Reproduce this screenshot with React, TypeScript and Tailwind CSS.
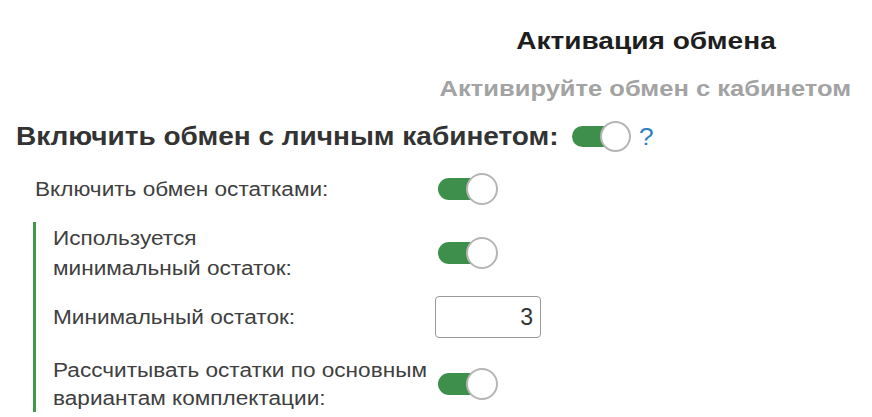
import React from "react";

function Toggle({ small = false }: { small?: boolean }) {
  return (
    <div className={small ? "relative w-[59px] h-[31px] shrink-0" : "relative w-[60px] h-[32px] shrink-0"}>
      <div className={small ? "absolute left-0 top-[5px] w-[44px] h-[21px] rounded-full bg-[#3f8f4c]" : "absolute left-0 top-[5px] w-[44px] h-[22px] rounded-full bg-[#3f8f4c]"} />
      <div className={small ? "absolute right-0 top-0 w-[31px] h-[31px] rounded-full bg-white border-2 border-[#b5b5b5]" : "absolute right-0 top-0 w-[32px] h-[32px] rounded-full bg-white border-2 border-[#b5b5b5]"} />
    </div>
  );
}

const label = "text-[20px] text-[#404040] origin-left scale-x-[1.13] whitespace-nowrap";

export default function App() {
  return (
    <div className="w-[872px] h-[417px] bg-white overflow-hidden" style={{ fontFamily: '"Liberation Sans", Arial, sans-serif' }}>
      <div className="ml-[440px] w-[411px] pt-[26px] flex flex-col items-center">
        <div className="text-[24px] leading-[30px] font-bold text-[#1e1e1e] scale-x-[1.17] whitespace-nowrap">Активация обмена</div>
        <div className="mt-[19px] text-[22px] leading-[28px] font-bold text-[#a3a3a3] scale-x-[1.16] whitespace-nowrap">Активируйте обмен с кабинетом</div>
      </div>
      <div className="flex items-center pl-[16px] mt-[18px] h-[31px]">
        <div className="w-[556px] shrink-0 text-[25px] leading-[31px] font-bold text-[#333] origin-left scale-x-[1.12] whitespace-nowrap">Включить обмен с личным кабинетом:</div>
        <Toggle small />
        <div className="ml-[8px] text-[24px] leading-[31px] text-[#2f7fc5] origin-left scale-x-[1.1]">?</div>
      </div>
      <div className="pl-[35px] mt-[21px]">
        <div className="flex items-center h-[32px]">
          <div className={`w-[403px] shrink-0 leading-[28px] ${label}`}>Включить обмен остатками:</div>
          <Toggle />
        </div>
        <div className="ml-[-2px] mt-[17px] border-l-[3px] border-[#3f9a4c] pl-[17px] pt-[1px]">
          <div className="flex items-center">
            <div className={`w-[385px] shrink-0 leading-[30px] ${label}`}>Используется<br />минимальный остаток:</div>
            <Toggle />
          </div>
          <div className="flex items-center mt-[13px]">
            <div className={`w-[382px] shrink-0 leading-[28px] ${label}`}>Минимальный остаток:</div>
            <div className="w-[106px] h-[42px] border border-[#9a9a9a] rounded-[4px] flex items-center justify-end pr-[7px] text-[23px] text-[#333]">3</div>
          </div>
          <div className="flex items-center mt-[18px]">
            <div className={`w-[385px] shrink-0 leading-[28px] ${label}`}>Рассчитывать остатки по основным<br />вариантам комплектации:</div>
            <Toggle />
          </div>
        </div>
      </div>
    </div>
  );
}
